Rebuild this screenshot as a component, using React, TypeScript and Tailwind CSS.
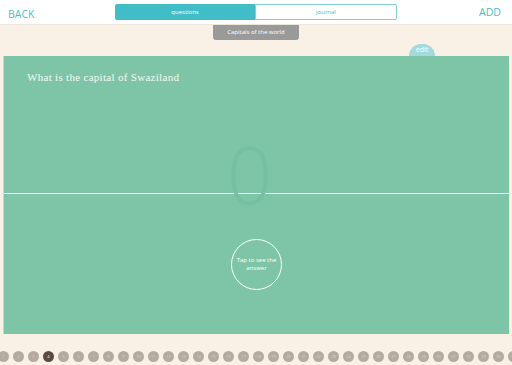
export default function App() {
  const dots = Array.from({ length: 35 }, (_, i) => i + 1);
  const active = 4;

  return (
    <div
      className="w-[512px] h-[365px] overflow-hidden bg-[#f9f1e6] relative"
      style={{ fontFamily: '"Open Sans", sans-serif' }}
    >
      {/* Header */}
      <div className="h-[25px] bg-white border-b border-[#ece5da] flex items-center px-[8px]">
        <div className="flex-1">
          <button className="text-[#45c0c8] text-[10.5px] leading-none">BACK</button>
        </div>
        <div className="flex w-[282px] h-[16px]">
          <div className="flex-1 bg-[#40bdc6] text-white text-[6px] flex items-center justify-center rounded-l-[2px]">
            questions
          </div>
          <div className="flex-1 bg-white border-[1.5px] border-[#7fd1d7] text-[#45c0c8] text-[6px] flex items-center justify-center rounded-r-[2px]">
            journal
          </div>
        </div>
        <div className="flex-1 flex justify-end">
          <button className="text-[#45c0c8] text-[10.5px] leading-none mr-[3px]">ADD</button>
        </div>
      </div>

      {/* Category badge */}
      <div className="flex justify-center">
        <div className="w-[86px] h-[15px] bg-[#9a9a9a] text-white text-[6px] flex items-center justify-center rounded-b-[3px]">
          Capitals of the world
        </div>
      </div>

      {/* Edit tab */}
      <div className="h-[16px] flex justify-end pr-[77px] items-end">
        <div className="w-[26px] h-[12px] rounded-t-full bg-[#a2dade] text-white text-[7px] flex items-start justify-center pt-[2px] leading-none">
          edit
        </div>
      </div>

      {/* Card */}
      <div className="mx-[3px] w-[506px] h-[278px] bg-[#7ec5a8] border-l border-[#b9dcc8] relative flex flex-col">
        <div className="h-[138px] relative border-b-[1.5px] border-white">
          <p
            className="text-[#f4f8f0] text-[11px] pl-[23px] pt-[13px] tracking-[0.3px]"
            style={{ fontFamily: '"Liberation Serif", serif' }}
          >
            What is the capital of Swaziland
          </p>
        </div>
        <div className="flex-1 flex items-center justify-center">
          <div className="w-[51px] h-[51px] rounded-full border-[1.5px] border-white flex items-center justify-center text-center text-white text-[6px] leading-[8px] px-[4px]">
            Tap to see the answer
          </div>
        </div>
        <div className="absolute left-0 right-0 top-[77px] flex justify-center pr-[14px] pointer-events-none">
          <span className="text-[80px] font-light leading-none text-[#75c0a1]">0</span>
        </div>
      </div>

      {/* Pager dots */}
      <div className="flex gap-[4px] ml-[-2px] mt-[17px]">
        {dots.map((d) => (
          <div
            key={d}
            className={
              d === active
                ? 'w-[11px] h-[11px] shrink-0 rounded-full bg-[#5a4a40] text-white text-[4px] flex items-center justify-center'
                : 'w-[11px] h-[11px] shrink-0 rounded-full bg-[#b5aa9f] text-[#ddd5cb] text-[4px] flex items-center justify-center'
            }
          >
            {d}
          </div>
        ))}
      </div>
    </div>
  );
}
